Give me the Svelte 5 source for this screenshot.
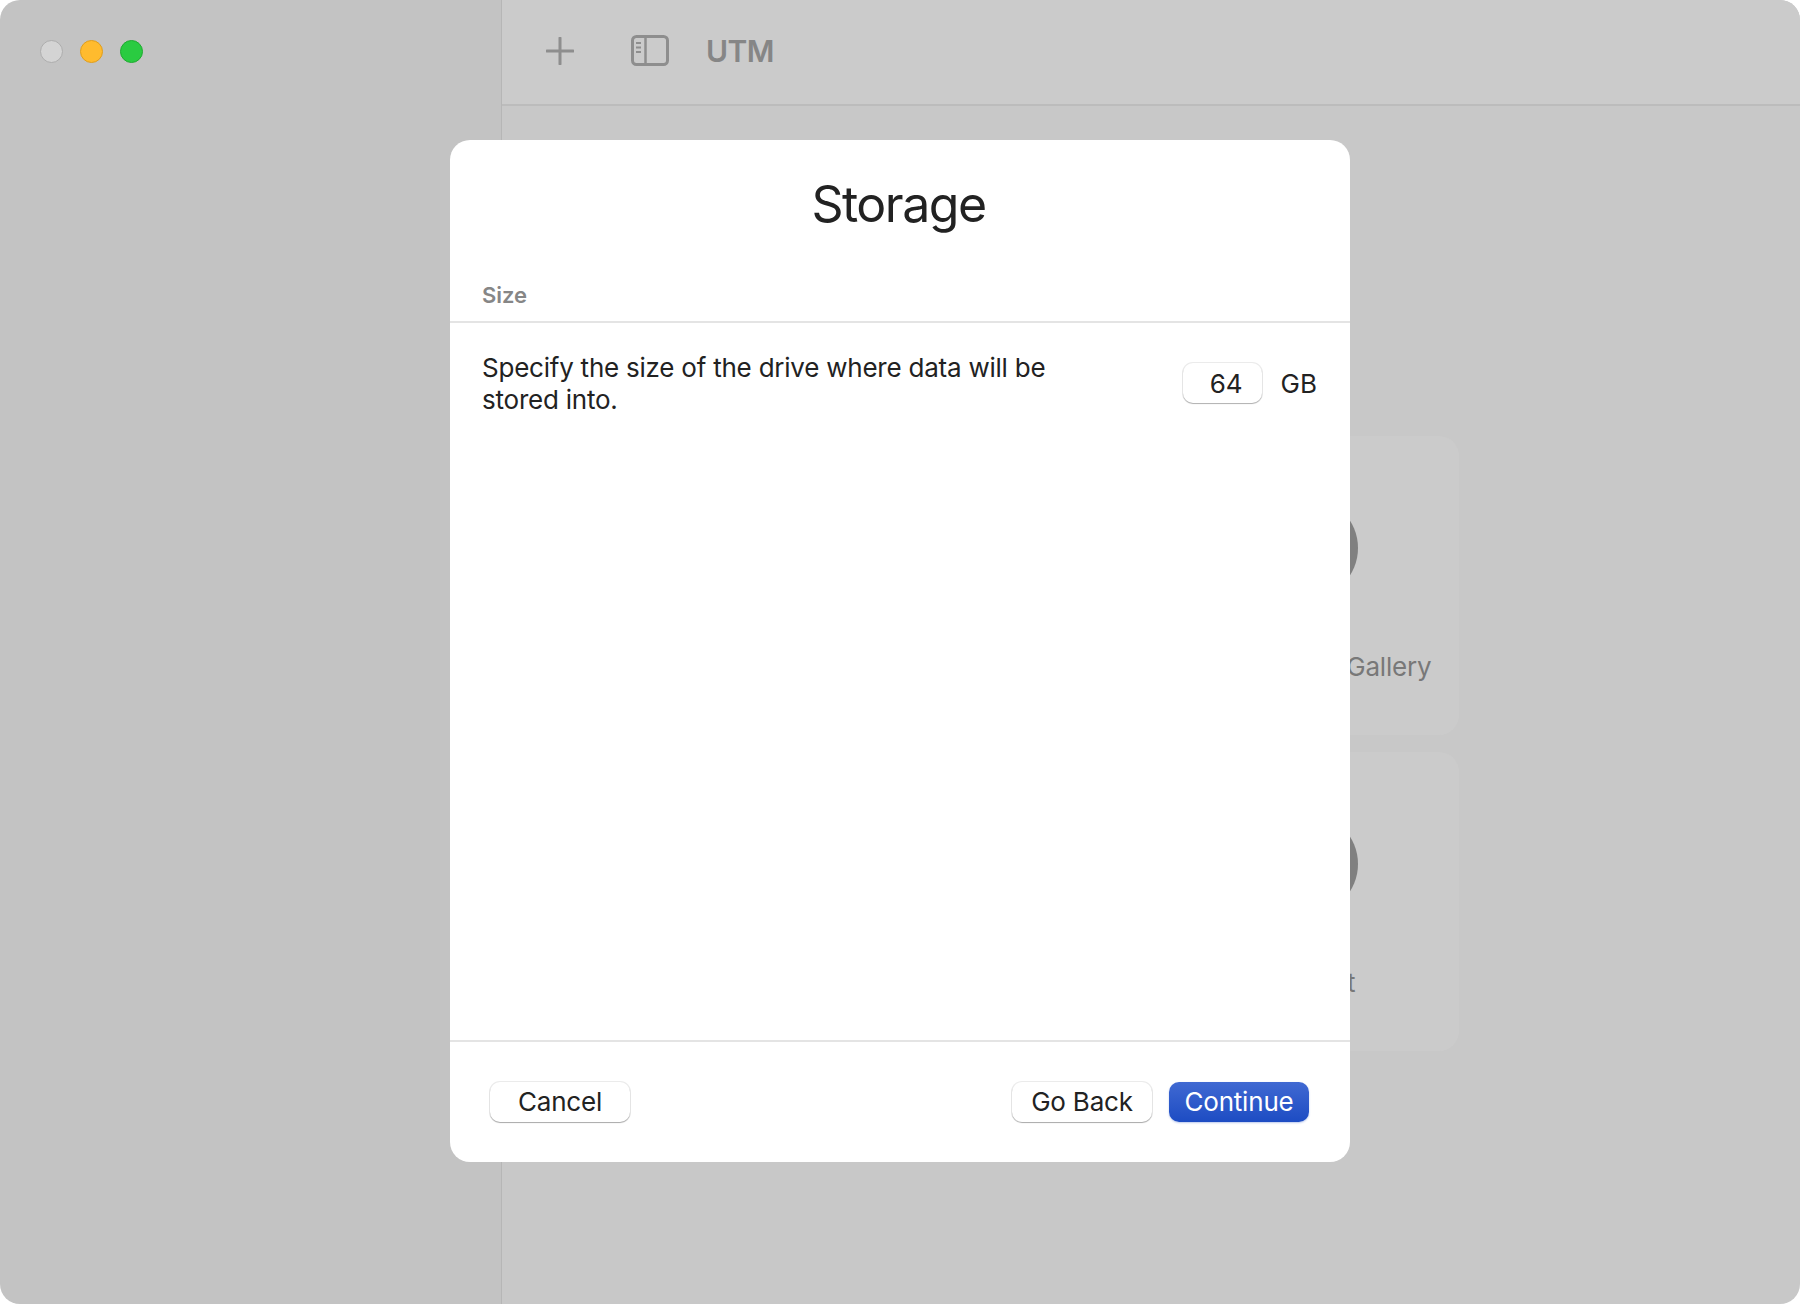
<script>
  const cards = ['Browse UTM Gallery', 'Support'];
  let size = $state('64');
</script>

<div class="window">
  <aside class="sidebar">
    <div class="lights">
      <span class="light grey"></span>
      <span class="light yellow"></span>
      <span class="light green"></span>
    </div>
  </aside>

  <main class="main">
    <header class="toolbar">
      <svg class="icon-plus" width="28" height="28" viewBox="0 0 28 28">
        <path d="M14 1v26M1 14h26" fill="none" stroke="#8e8e8e" stroke-width="3" stroke-linecap="round" />
      </svg>
      <svg class="icon-sidebar" width="38" height="31" viewBox="0 0 38 31">
        <rect x="1.5" y="1.5" width="35" height="28" rx="4" fill="none" stroke="#8e8e8e" stroke-width="3" />
        <path d="M14.5 2v27" fill="none" stroke="#8e8e8e" stroke-width="2.5" />
        <path d="M5 8h5M5 12.5h5M5 17h5" fill="none" stroke="#8e8e8e" stroke-width="2" />
      </svg>
      <span class="app-title">UTM</span>
    </header>

    <div class="cards">
      {#each cards as label}
        <div class="card">
          <div class="circle"></div>
          <div class="card-label">{label}</div>
        </div>
      {/each}
    </div>
  </main>

  <div class="dialog">
    <h1 class="title">Storage</h1>
    <div class="section-label">Size</div>
    <div class="row">
      <p class="desc">Specify the size of the drive where data will be stored into.</p>
      <div class="size-field">
        <input class="field" bind:value={size} />
        <span class="unit">GB</span>
      </div>
    </div>
    <footer class="footer">
      <button class="btn">Cancel</button>
      <div class="footer-right">
        <button class="btn">Go Back</button>
        <button class="btn primary">Continue</button>
      </div>
    </footer>
  </div>
</div>

<style>
  :global(body) {
    background: #fff;
  }

  .window {
    position: relative;
    width: 1800px;
    height: 1304px;
    display: grid;
    grid-template-columns: 502px 1fr;
    border-radius: 20px;
    overflow: hidden;
    font-family: Inter, "Liberation Sans", sans-serif;
    color: #222;
  }

  .sidebar {
    background: #c3c3c3;
    border-right: 1px solid #b6b6b6;
  }

  .lights {
    display: flex;
    gap: 17px;
    padding: 40px 0 0 40px;
  }
  .light {
    width: 23px;
    height: 23px;
    border-radius: 50%;
    box-sizing: border-box;
    border: 1px solid;
  }
  .grey { background: #d4d4d4; border-color: #adadad; }
  .yellow { background: #ffbb2e; border-color: #e09e1c; }
  .green { background: #2acb41; border-color: #1fab30; }

  .main {
    background: #c8c8c8;
    display: flex;
    flex-direction: column;
  }

  .toolbar {
    height: 106px;
    box-sizing: border-box;
    background: #cbcbcb;
    border-bottom: 2px solid #bcbcbc;
    display: flex;
    align-items: center;
    padding: 0 0 3px 44px;
  }
  .icon-sidebar { margin-left: 57px; }
  .app-title {
    margin-left: 37px;
    font-size: 30px;
    font-weight: 600;
    letter-spacing: -0.6px;
    color: #868686;
  }

  .cards {
    display: flex;
    flex-direction: column;
    gap: 17px;
    align-items: flex-end;
    padding: 330px 341px 0 0;
  }
  .card {
    width: 292px;
    height: 299px;
    box-sizing: border-box;
    padding-right: 12px;
    border-radius: 20px;
    background: #cbcbcb;
    display: flex;
    flex-direction: column;
    align-items: center;
  }
  .circle {
    width: 102px;
    height: 102px;
    border-radius: 50%;
    background: #808080;
    margin-top: 61px;
  }
  .card-label {
    margin-top: 52px;
    font-size: 26px;
    line-height: 32px;
    letter-spacing: -0.2px;
    color: #787878;
    white-space: nowrap;
  }

  .dialog {
    position: absolute;
    left: 450px;
    top: 140px;
    width: 900px;
    height: 1022px;
    background: #fff;
    border-radius: 20px;
    display: flex;
    flex-direction: column;
  }

  .title {
    margin: 0;
    padding: 32px 3px 0 0;
    text-align: center;
    font-size: 50px;
    line-height: 64px;
    font-weight: 400;
    letter-spacing: -1.5px;
    color: #222;
  }

  .section-label {
    margin-top: 45px;
    padding: 0 32px 12px;
    font-size: 22px;
    line-height: 28px;
    font-weight: 600;
    color: #868686;
    border-bottom: 2px solid #e4e4e4;
  }

  .row {
    flex: 1;
    display: flex;
    justify-content: space-between;
    align-items: flex-start;
    padding: 29px 33px 0 32px;
  }
  .desc {
    margin: 0;
    width: 580px;
    font-size: 26px;
    line-height: 32px;
    letter-spacing: -0.23px;
    color: #222;
  }

  .size-field {
    display: flex;
    align-items: center;
    gap: 19px;
    margin-top: 11px;
  }
  .field {
    width: 79px;
    height: 40px;
    box-sizing: border-box;
    border: none;
    border-radius: 10px;
    background: #fff;
    box-shadow: 0 1px 1px rgba(0, 0, 0, 0.25), 0 0 0 1px #ebebeb;
    padding: 0 19px 0 0;
    text-align: right;
    font: inherit;
    font-size: 26px;
    color: #222;
    outline: none;
  }
  .unit {
    font-size: 26px;
    color: #222;
  }

  .footer {
    height: 122px;
    box-sizing: border-box;
    border-top: 2px solid #e4e4e4;
    display: flex;
    justify-content: space-between;
    padding: 40px 41px 0 40px;
  }
  .footer-right {
    display: flex;
    gap: 17px;
  }

  .btn {
    width: 140px;
    height: 40px;
    padding: 0 0 2px;
    border: none;
    border-radius: 10px;
    background: #fff;
    box-shadow: 0 1px 1px rgba(0, 0, 0, 0.28), 0 0 0 1px #ebebeb;
    font: inherit;
    font-size: 26px;
    letter-spacing: -0.2px;
    color: #222;
  }
  .primary {
    background: linear-gradient(to bottom, #4069d2, #1d4cc3);
    box-shadow: 0 1px 2px rgba(29, 76, 195, 0.3);
    color: #fff;
  }
</style>
